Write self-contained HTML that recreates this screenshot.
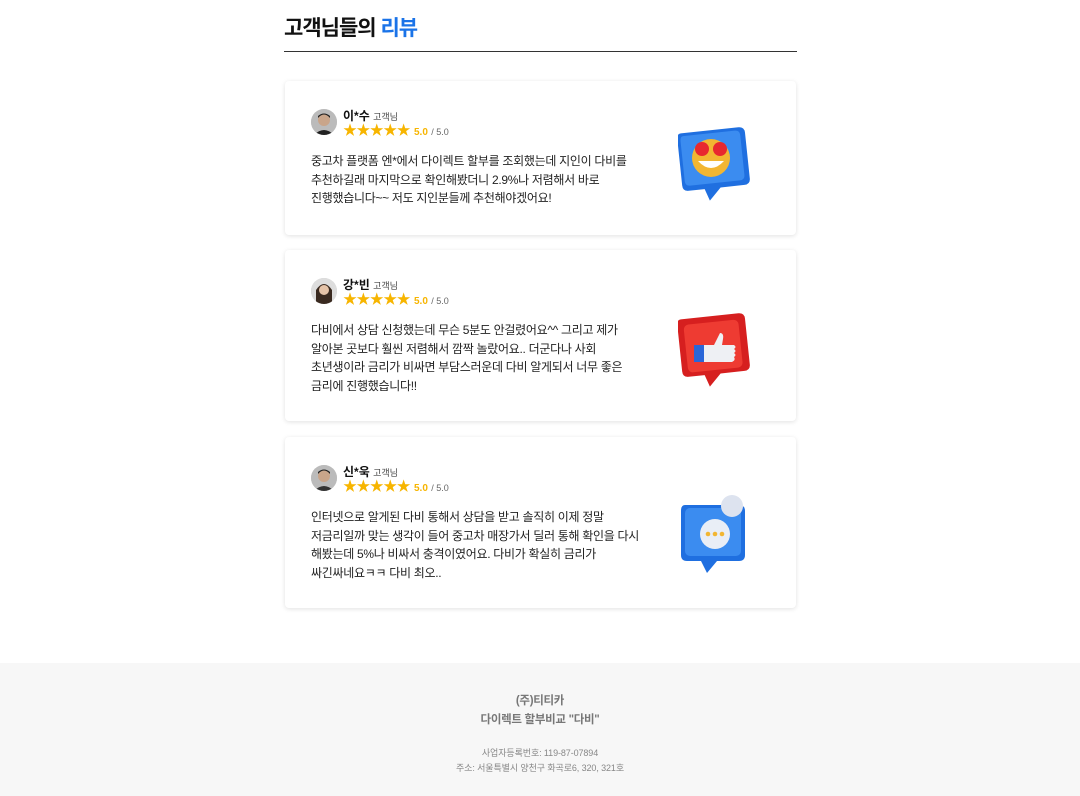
<!DOCTYPE html>
<html><head><meta charset="utf-8"><style>
*{margin:0;padding:0;box-sizing:border-box}
body{width:1080px;height:796px;background:#fff;font-family:"Liberation Sans","Noto Sans CJK KR",sans-serif;color:#111;position:relative;overflow:hidden}
h1{position:absolute;left:284px;top:12px;font-size:21px;font-weight:700;letter-spacing:-1px}
h1 span{color:#1a73e8}
.rule{position:absolute;left:284px;top:51px;width:513px;height:1px;background:#333}
.card{position:absolute;left:285px;width:511px;background:#fff;border-radius:4px;box-shadow:0 1px 5px rgba(0,0,0,.12)}
.av{position:absolute;left:26px;width:26px;height:26px;border-radius:50%;background:#ccc;overflow:hidden}
.nm{position:absolute;left:58px;font-size:12px;font-weight:700}
.nm small{font-size:9px;font-weight:400;color:#444}
.st{position:absolute;left:58px;font-size:14px;line-height:16px;color:#f7b500;letter-spacing:-0.6px;white-space:nowrap}
.st b{font-size:10px;letter-spacing:0;margin-left:4px}
.st i{font-style:normal;font-size:9px;color:#666;letter-spacing:0}
.tx{position:absolute;left:26px;font-size:12px;line-height:18.5px;color:#222;letter-spacing:-0.3px}
.ic{position:absolute}
.foot{position:absolute;left:0;top:663px;width:1080px;height:133px;background:#f7f7f7;text-align:center;color:#777}
</style></head><body>
<h1>고객님들의 <span>리뷰</span></h1>
<div class="rule"></div>

<div class="card" style="top:81px;height:154px">
 <div class="av" style="top:28px"><svg width="26" height="26"><rect width="26" height="26" fill="#bbb"/><circle cx="13" cy="11" r="6" fill="#c9a58a"/><path d="M7 9q6-7 12 0v-2q-6-5-12 0z" fill="#222"/><path d="M3 26q10-10 20 0z" fill="#222"/></svg></div>
 <div class="nm" style="top:26px">이*수 <small>고객님</small></div>
 <div class="st" style="top:41px">★★★★★<b>5.0</b> <i>/ 5.0</i></div>
 <div class="tx" style="top:71px">중고차 플랫폼 엔*에서 다이렉트 할부를 조회했는데 지인이 다비를<br>추천하길래 마지막으로 확인해봤더니 2.9%나 저렴해서 바로<br>진행했습니다~~ 저도 지인분들께 추천해야겠어요!</div>
 <svg class="ic" style="left:393px;top:46px" width="72" height="74" viewBox="0 0 72 74"><g transform="rotate(-6 36 36)"><path d="M6 3h58q6 0 6 6v46q0 6-6 6H40l-12 12-4-12H8q-6 0-6-6V9q0-6 4-6z" fill="#1f6fe0"/><path d="M8 6h52q5 0 5 5v40q0 5-5 5H10q-5 0-5-5V11q0-5 3-5z" fill="#3b8cf0"/></g><circle cx="33" cy="31" r="19" fill="#f2b632"/><path d="M20 34q13 14 26 0z" fill="#fff"/><circle cx="24" cy="22" r="7" fill="#e8282f"/><circle cx="42" cy="22" r="7" fill="#e8282f"/></svg>
</div>

<div class="card" style="top:250px;height:171px">
 <div class="av" style="top:28px"><svg width="26" height="26"><rect width="26" height="26" fill="#ddd"/><path d="M5 26V12q8-12 16 0v14z" fill="#3a2a20"/><circle cx="13" cy="12" r="5" fill="#e5c3a8"/></svg></div>
 <div class="nm" style="top:26px">강*빈 <small>고객님</small></div>
 <div class="st" style="top:41px">★★★★★<b>5.0</b> <i>/ 5.0</i></div>
 <div class="tx" style="top:71px">다비에서 상담 신청했는데 무슨 5분도 안걸렸어요^^ 그리고 제가<br>알아본 곳보다 훨씬 저렴해서 깜짝 놀랐어요.. 더군다나 사회<br>초년생이라 금리가 비싸면 부담스러운데 다비 알게되서 너무 좋은<br>금리에 진행했습니다!!</div>
 <svg class="ic" style="left:393px;top:63px" width="72" height="74" viewBox="0 0 72 74"><path d="M6 3h58q6 0 6 6v46q0 6-6 6H40l-12 12-4-12H8q-6 0-6-6V9q0-6 4-6z" fill="#d61f1f" transform="rotate(-6 36 36)"/><rect x="8" y="9" width="55" height="48" rx="5" fill="#ee3b32" transform="rotate(-6 36 36)"/><rect x="16" y="32" width="10" height="17" fill="#2a66d8"/><path d="M26 32h10l6-12q4 0 3 6l-1 6h12q3 2 0 4 3 2 0 4 3 2 0 4 2 3-2 5H26z" fill="#eef0f4"/></svg>
</div>

<div class="card" style="top:437px;height:171px">
 <div class="av" style="top:28px"><svg width="26" height="26"><rect width="26" height="26" fill="#bbb"/><circle cx="13" cy="11" r="6" fill="#c9a58a"/><path d="M7 9q6-7 12 0v-2q-6-5-12 0z" fill="#222"/><path d="M3 26q10-10 20 0z" fill="#333"/></svg></div>
 <div class="nm" style="top:26px">신*욱 <small>고객님</small></div>
 <div class="st" style="top:41px">★★★★★<b>5.0</b> <i>/ 5.0</i></div>
 <div class="tx" style="top:71px">인터넷으로 알게된 다비 통해서 상담을 받고 솔직히 이제 정말<br>저금리일까 맞는 생각이 들어 중고차 매장가서 딜러 통해 확인을 다시<br>해봤는데 5%나 비싸서 충격이였어요. 다비가 확실히 금리가<br>싸긴싸네요ㅋㅋ 다비 최오..</div>
 <svg class="ic" style="left:394px;top:56px" width="70" height="86" viewBox="0 0 70 86"><path d="M6 12h54q6 0 6 6v44q0 6-6 6H38l-10 12-6-12H8q-6 0-6-6V18q0-6 4-6z" fill="#1f6fe0"/><rect x="6" y="15" width="56" height="48" rx="5" fill="#3b8cf0"/><circle cx="53" cy="13" r="11" fill="#dde3ef"/><circle cx="36" cy="41" r="15" fill="#e9eef6"/><circle cx="29" cy="41" r="2.3" fill="#f2b632"/><circle cx="36" cy="41" r="2.3" fill="#f2b632"/><circle cx="43" cy="41" r="2.3" fill="#f2b632"/></svg>
</div>

<div class="foot">
 <div style="margin-top:29px;font-size:11.5px;font-weight:700;line-height:19px;letter-spacing:-0.3px">(주)티티카<br>다이렉트 할부비교 "다비"</div>
 <div style="margin-top:16px;font-size:9px;line-height:15px;color:#888;letter-spacing:-0.1px">사업자등록번호: 119-87-07894<br>주소: 서울특별시 양천구 화곡로6, 320, 321호</div>
</div>
</body></html>
